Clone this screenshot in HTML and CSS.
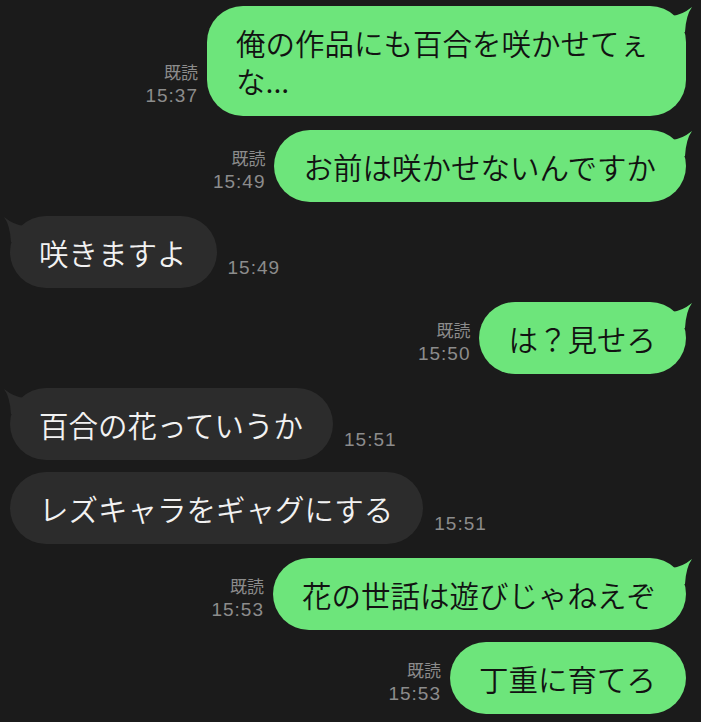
FILE: index.html
```html
<!DOCTYPE html>
<html lang="ja">
<head>
    <meta charset="UTF-8">
    <title>トーク</title>
    <link rel="stylesheet" href="styles.css">
</head>
<body>
    <div class="chat">
        <div class="row sent">
            <div class="meta"><div class="read">既読</div><div class="time">15:37</div></div>
            <div class="bubble">俺の作品にも百合を咲かせてぇな...
                <svg class="tail" viewBox="0 0 24 30" width="24" height="30"><path d="M4 10 Q14 9 24 1 Q18 9 17 26 L4 26 Z" fill="currentColor"/></svg>
            </div>
        </div>
        <div class="row sent">
            <div class="meta"><div class="read">既読</div><div class="time">15:49</div></div>
            <div class="bubble">お前は咲かせないんですか
                <svg class="tail" viewBox="0 0 24 30" width="24" height="30"><path d="M4 10 Q14 9 24 1 Q18 9 17 26 L4 26 Z" fill="currentColor"/></svg>
            </div>
        </div>
        <div class="row received">
            <div class="bubble">咲きますよ
                <svg class="tail" viewBox="0 0 24 30" width="24" height="30"><path d="M4 10 Q14 9 24 1 Q18 9 17 26 L4 26 Z" fill="currentColor"/></svg>
            </div>
            <div class="meta"><div class="time">15:49</div></div>
        </div>
        <div class="row sent">
            <div class="meta"><div class="read">既読</div><div class="time">15:50</div></div>
            <div class="bubble">は？見せろ
                <svg class="tail" viewBox="0 0 24 30" width="24" height="30"><path d="M4 10 Q14 9 24 1 Q18 9 17 26 L4 26 Z" fill="currentColor"/></svg>
            </div>
        </div>
        <div class="row received">
            <div class="bubble">百合の花っていうか
                <svg class="tail" viewBox="0 0 24 30" width="24" height="30"><path d="M4 10 Q14 9 24 1 Q18 9 17 26 L4 26 Z" fill="currentColor"/></svg>
            </div>
            <div class="meta"><div class="time">15:51</div></div>
        </div>
        <div class="row received next">
            <div class="bubble">レズキャラをギャグにする</div>
            <div class="meta"><div class="time">15:51</div></div>
        </div>
        <div class="row sent">
            <div class="meta"><div class="read">既読</div><div class="time">15:53</div></div>
            <div class="bubble">花の世話は遊びじゃねえぞ
                <svg class="tail" viewBox="0 0 24 30" width="24" height="30"><path d="M4 10 Q14 9 24 1 Q18 9 17 26 L4 26 Z" fill="currentColor"/></svg>
            </div>
        </div>
        <div class="row sent next">
            <div class="meta"><div class="read">既読</div><div class="time">15:53</div></div>
            <div class="bubble">丁重に育てろ</div>
        </div>
    </div>
</body>
</html>
```

FILE: styles.css
```css
body {
    margin: 0;
    background-color: #1b1b1b;
    font-family: "Noto Sans CJK JP", "Noto Sans", sans-serif;
}
.chat {
    display: flex;
    flex-direction: column;
    gap: 14px;
    padding: 6px 15px 0 10px;
}
.row {
    display: flex;
    align-items: flex-end;
}
.row.next {
    margin-top: -2px;
}
.sent {
    justify-content: flex-end;
    gap: 9px;
}
.received {
    justify-content: flex-start;
    gap: 11px;
}
.bubble {
    position: relative;
    box-sizing: border-box;
    max-width: 479px;
    padding: 17px 30px 17px 29px;
    border-radius: 36px;
    font-size: 29.5px;
    font-weight: 350;
    line-height: 38px;
}
.sent .bubble {
    background-color: #6de57b;
    color: #121212;
}
.received .bubble {
    background-color: #2c2c2c;
    color: #f2f2f2;
}
.tail {
    position: absolute;
    top: 0;
    display: block;
}
.sent .tail {
    right: -6px;
    color: #6de57b;
}
.received .tail {
    left: -6px;
    color: #2c2c2c;
    transform: scaleX(-1);
}
.meta {
    margin-bottom: 8px;
    color: #8c8c8c;
    line-height: 24px;
}
.sent .meta {
    text-align: right;
}
.read {
    font-size: 17px;
}
.time {
    font-family: "Liberation Sans", Arial, sans-serif;
    font-size: 19px;
    letter-spacing: 1px;
}
```
